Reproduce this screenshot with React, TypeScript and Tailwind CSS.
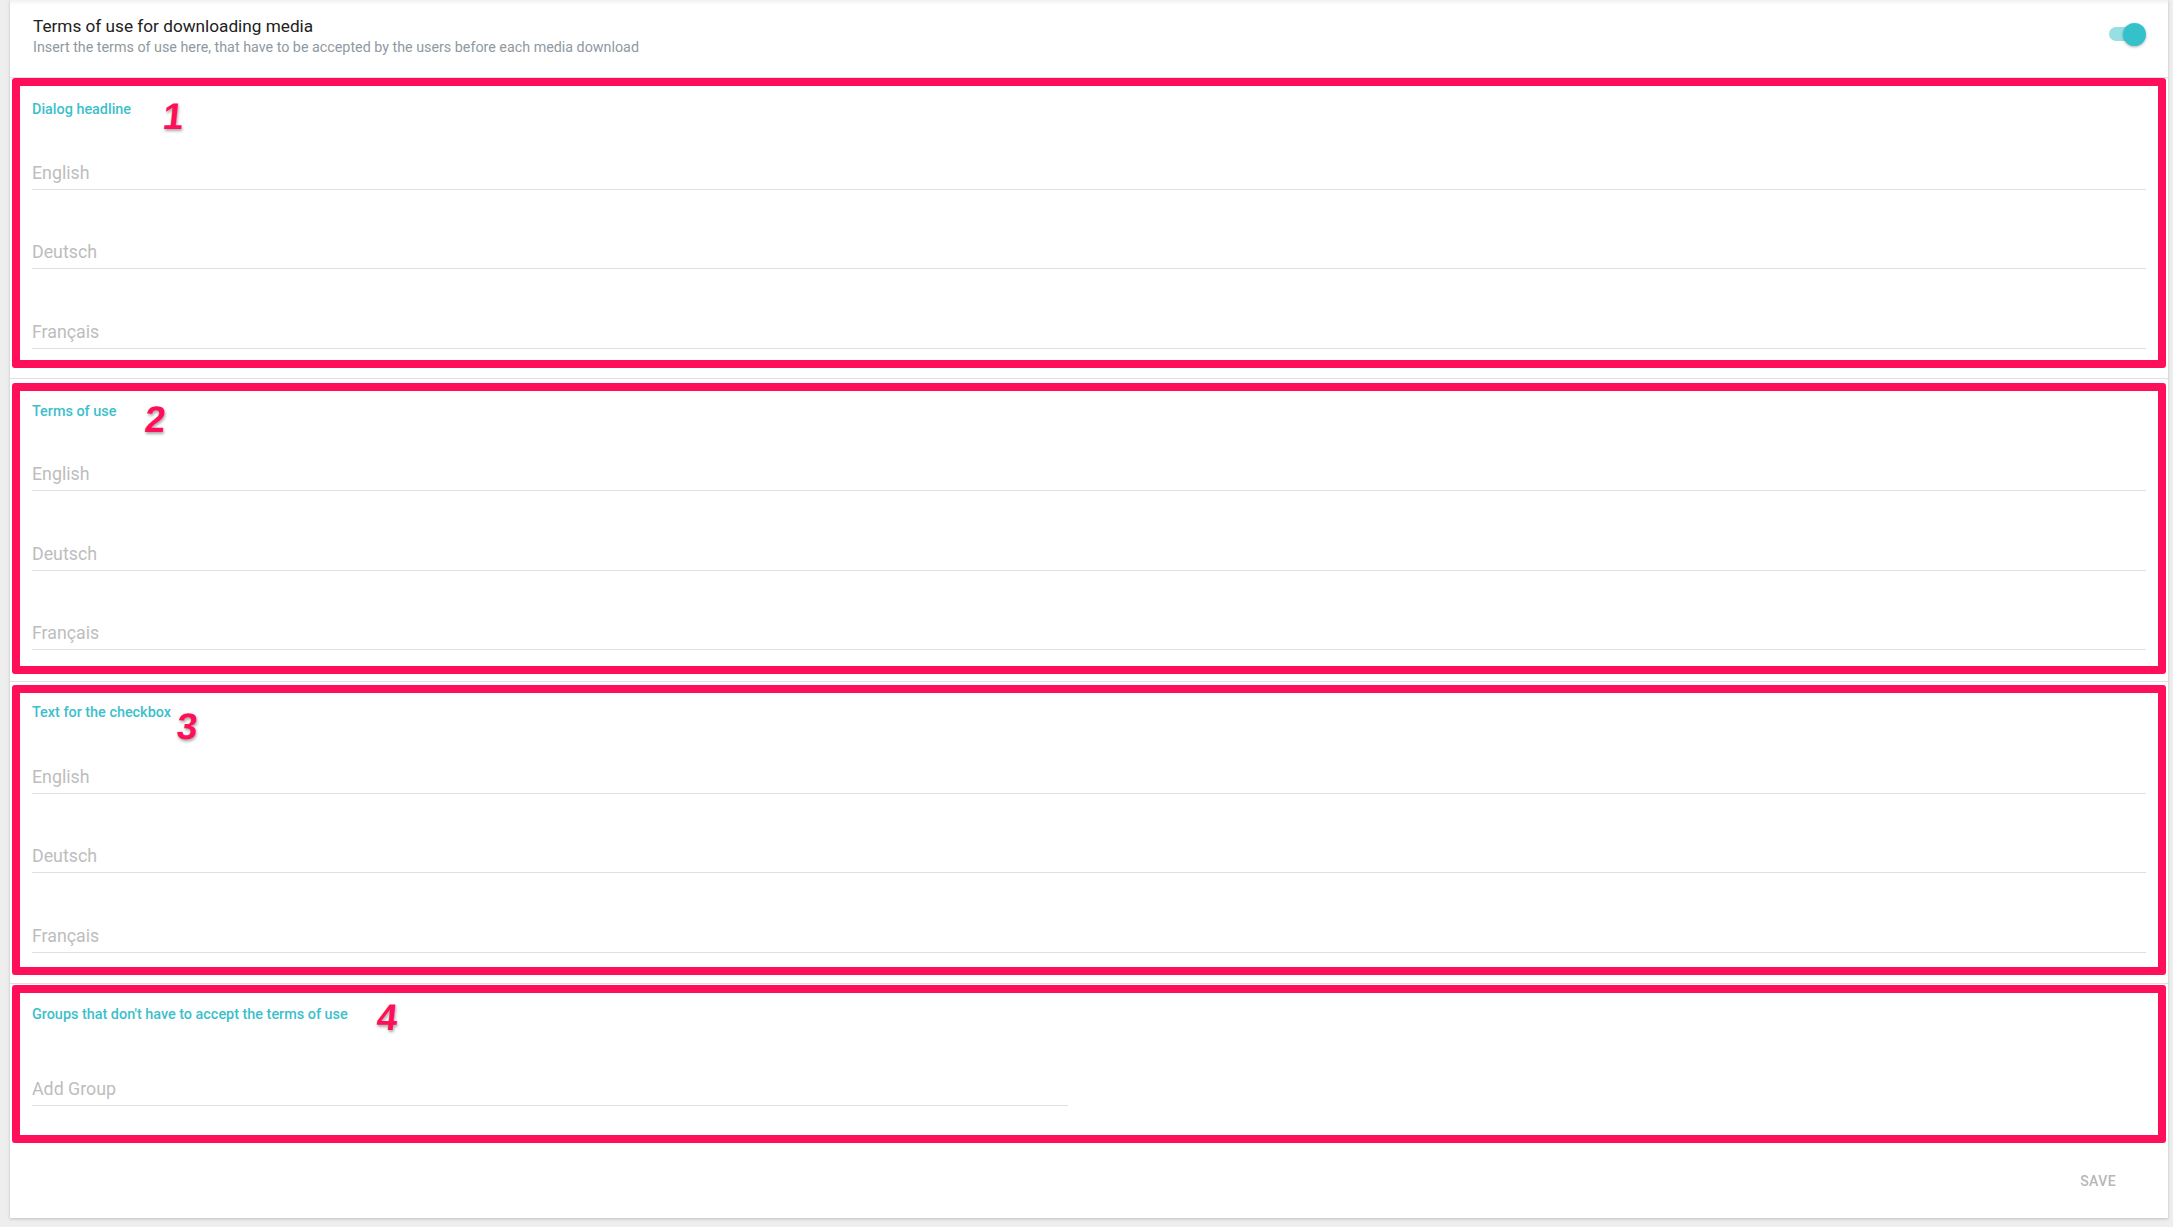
import React from 'react';

type Section = {
  label: string;
  badge: string;
  badgePos: string;
  pad: string;
  heights: string[];
};

const langs = ['English', 'Deutsch', 'Français'];

const sections: Section[] = [
  { label: 'Dialog headline', badge: '1', badgePos: 'left-[143px] top-[12px]', pad: 'pt-[16px] pb-[11px]', heights: ['h-[72px]', 'h-[79px]', 'h-[80px]'] },
  { label: 'Terms of use', badge: '2', badgePos: 'left-[125px] top-[10px]', pad: 'pt-[13px] pb-[16px]', heights: ['h-[71px]', 'h-[80px]', 'h-[79px]'] },
  { label: 'Text for the checkbox', badge: '3', badgePos: 'left-[157px] top-[15px]', pad: 'pt-[12px] pb-[14px]', heights: ['h-[73px]', 'h-[79px]', 'h-[80px]'] },
];

const Badge = ({ n, pos }: { n: string; pos: string }) => (
  <span
    className={`absolute ${pos} inline-block -skew-x-6 font-['Liberation_Sans',sans-serif] text-[37px] leading-none font-bold text-[#ff0f5a] [-webkit-text-stroke:6px_white] [paint-order:stroke_fill] [text-shadow:1px_2px_3px_rgba(0,0,0,0.35)]`}
  >
    {n}
  </span>
);

const Field = ({ text, h }: { text: string; h: string }) => (
  <div className={`${h} flex items-end border-b border-[#e0e0e0]`}>
    <span className="pb-[6px] text-[17.8px] leading-[20px] text-[#bdbdbd]">{text}</span>
  </div>
);

const SectionLabel = ({ text }: { text: string }) => (
  <div className="text-[14.4px] leading-[16px] font-medium text-[#3cbfcb]">{text}</div>
);

const LangSection = ({ s }: { s: Section }) => (
  <div className="relative mx-[2px] rounded-[3px] border-8 border-[#ff0f5a] px-[12px]">
    <div className={s.pad}>
      <SectionLabel text={s.label} />
      {langs.map((l, i) => (
        <Field key={l} text={l} h={s.heights[i]} />
      ))}
    </div>
    <Badge n={s.badge} pos={s.badgePos} />
  </div>
);

const Divider = ({ mt, mb }: { mt: string; mb: string }) => (
  <div className={`${mt} ${mb} h-px bg-[#e0e0e0]`} />
);

export default function App() {
  return (
    <div className="w-[2173px] h-[1227px] bg-[#eeeeee] pl-[10px] pr-[5px] pb-[9px] font-['Roboto',sans-serif]">
      <div className="h-full bg-white shadow-[0_1px_3px_rgba(0,0,0,0.2)] flex flex-col">
        {/* header */}
        <div className="h-[78px] border-b border-[#e0e0e0] flex pl-[23px] pr-[22px] shadow-[inset_0_5px_4px_-3px_rgba(0,0,0,0.07)]">
          <div className="flex-1 pt-[16px]">
            <div className="text-[17.2px] leading-[20px] text-[#212121]">Terms of use for downloading media</div>
            <div className="mt-[3px] text-[14.3px] leading-[16px] text-[#8f999f]">
              Insert the terms of use here, that have to be accepted by the users before each media download
            </div>
          </div>
          <div className="pt-[23px]">
            <div className="relative w-[40px] h-[22px] flex items-center">
              <div className="ml-[3px] w-[34px] h-[14px] rounded-full bg-[#97dfe3]" />
              <div className="absolute right-0 top-0 w-[23px] h-[23px] rounded-full bg-[#35c1c9] shadow-[0_1px_3px_rgba(0,0,0,0.3)]" />
            </div>
          </div>
        </div>

        <LangSection s={sections[0]} />
        <Divider mt="mt-[10px]" mb="mb-[4px]" />
        <LangSection s={sections[1]} />
        <Divider mt="mt-[7px]" mb="mb-[3px]" />
        <LangSection s={sections[2]} />
        <Divider mt="mt-[8px]" mb="mb-[1px]" />

        <div className="relative mx-[2px] rounded-[3px] border-8 border-[#ff0f5a] px-[12px] pt-[14px] pb-[29px]">
          <SectionLabel text="Groups that don't have to accept the terms of use" />
          <div className="w-[1036px]">
            <Field text="Add Group" h="h-[83px]" />
          </div>
          <Badge n="4" pos="left-[357px] top-[6px]" />
        </div>

        <div className="flex-1 flex items-start justify-end pt-[29px] pr-[52px]">
          <span className="text-[14px] leading-[18px] font-medium tracking-[0.03em] text-[#b7b7b7]">SAVE</span>
        </div>
      </div>
    </div>
  );
}
